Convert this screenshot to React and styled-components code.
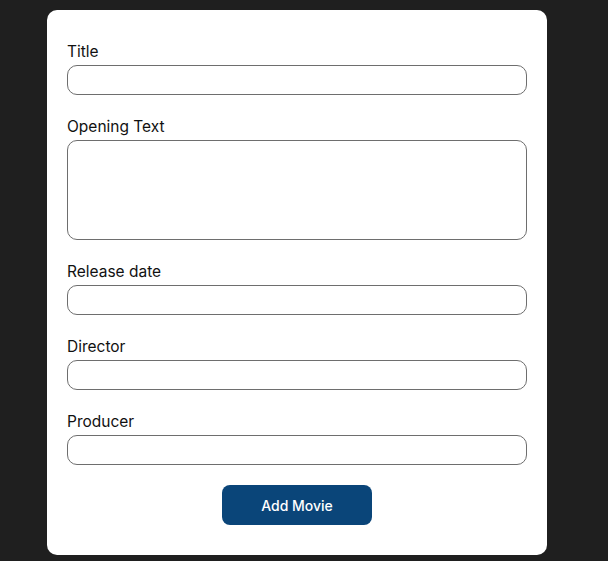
import React from 'react';
import styled, { createGlobalStyle } from 'styled-components';

const GlobalStyle = createGlobalStyle`
  body {
    margin: 0;
    background: #1f1f1f;
    font-family: Inter, "Noto Sans", sans-serif;
  }
`;

const Page = styled.div`
  min-height: 100vh;
  padding: 10px 0 7px 47px;
  box-sizing: border-box;
`;

const Card = styled.form`
  width: 500px;
  box-sizing: border-box;
  background: #fff;
  border-radius: 10px;
  padding: 30px 20px 30px;
  display: flex;
  flex-direction: column;
`;

const Control = styled.div`
  display: flex;
  flex-direction: column;
  margin-bottom: 20px;
`;

const Label = styled.label`
  font-size: 15.5px;
  line-height: 24px;
  color: #111;
  margin-bottom: 1px;
`;

const Input = styled.input`
  height: 30px;
  box-sizing: border-box;
  border: 1px solid #6e6e6e;
  border-radius: 10px;
  font: inherit;
  padding: 0 8px;
  outline: none;
`;

const TextArea = styled.textarea`
  height: 100px;
  box-sizing: border-box;
  border: 1px solid #6e6e6e;
  border-radius: 10px;
  font: inherit;
  padding: 6px 8px;
  resize: none;
  outline: none;
`;

const Button = styled.button`
  align-self: center;
  width: 150px;
  height: 40px;
  border: none;
  border-radius: 8px;
  background: #0a4579;
  color: #fff;
  font-family: inherit;
  font-size: 14px;
  font-weight: 500;
  cursor: pointer;
`;

const fields = [
  { id: 'title', label: 'Title' },
  { id: 'opening-text', label: 'Opening Text', multiline: true },
  { id: 'date', label: 'Release date' },
  { id: 'director', label: 'Director' },
  { id: 'producer', label: 'Producer' },
];

const App = () => (
  <Page>
    <GlobalStyle />
    <Card onSubmit={(e) => e.preventDefault()}>
      {fields.map((f) => (
        <Control key={f.id}>
          <Label htmlFor={f.id}>{f.label}</Label>
          {f.multiline ? <TextArea id={f.id} /> : <Input id={f.id} type="text" />}
        </Control>
      ))}
      <Button type="submit">Add Movie</Button>
    </Card>
  </Page>
);

export default App;
